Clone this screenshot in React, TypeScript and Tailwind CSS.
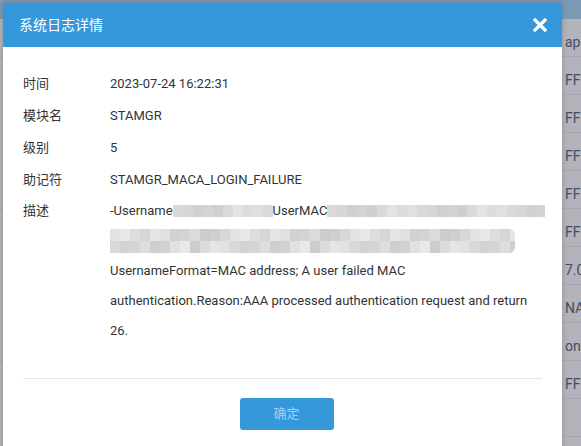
import React from "react";

const bgRows = ["ap8", "FFI", "FFI", "FFI", "FFI", "FFI", "7.0.", "NA-", " on", "FFI", ""];

const mosaicA = ["#d9d9d9", "#cfcfcf", "#e0e0e0", "#d4d4d4", "#dcdcdc", "#d0d0d0", "#e3e3e3", "#d6d6d6", "#dadada"];
const mosaicB = ["#e2e2e2", "#d3d3d3", "#dddddd", "#cccccc", "#e5e5e5", "#d8d8d8", "#d1d1d1", "#e8e8e8", "#dbdbdb", "#d5d5d5", "#cfcfcf", "#e0e0e0"];

function Mosaic({ width, height, rows, palette }: { width: number; height: number; rows: number; palette: string[] }) {
    const cell = 10;
    const cols = Math.ceil(width / cell);
    const ch = height / rows;
    const rects = [];
    for (let r = 0; r < rows; r++) {
        for (let c = 0; c < cols; c++) {
            const color = palette[(c * 7 + r * 5 + ((c * r) % 3)) % palette.length];
            rects.push(<rect key={`${r}-${c}`} x={c * cell} y={r * ch} width={cell} height={ch} fill={color} />);
        }
    }
    return (
        <svg width={width} height={height} className="inline-block align-middle" style={{ borderRadius: rows > 1 ? "0 6px 6px 0" : 0 }}>
            {rects}
        </svg>
    );
}

function Row({ label, children }: { label: string; children: React.ReactNode }) {
    return (
        <div className="flex">
            <div className="w-[87px] shrink-0 leading-[32px]">{label}</div>
            <div className="flex-1">{children}</div>
        </div>
    );
}

export default function App() {
    return (
        <div
            className="relative h-[446px] w-[581px] overflow-hidden bg-[#b3b3bb] text-[13px] text-[#4a4a62]"
            style={{ fontFamily: "Roboto, 'Noto Sans CJK SC', sans-serif" }}
        >
            {/* dimmed page behind */}
            <div className="h-[19px] bg-[#7d9ab5]" />
            <div className="flex flex-col">
                {bgRows.map((t, i) => (
                    <div key={i} className="h-[38px] border-b border-[#a6a6ae] pl-[565px] pt-[14px] whitespace-nowrap text-[14px] leading-[18px]">
                        {t}
                    </div>
                ))}
            </div>

            {/* dialog */}
            <div className="absolute left-[3px] top-[3px] h-[460px] w-[559px] bg-white shadow-[0_0_6px_rgba(0,0,0,0.2)]">
                <div className="flex h-[44px] items-center justify-between bg-[#3498db] pl-[16px] pr-[14px] text-[14px] text-white">
                    <span>系统日志详情</span>
                    <svg width="16" height="16" viewBox="0 0 16 16">
                        <path d="M3 3 L13 13 M13 3 L3 13" stroke="white" strokeWidth="3.2" strokeLinecap="square" />
                    </svg>
                </div>

                <div className="px-[20px] pt-[21px] text-[#333333]">
                    <Row label="时间"><div className="leading-[32px]">2023-07-24 16:22:31</div></Row>
                    <Row label="模块名"><div className="leading-[32px]">STAMGR</div></Row>
                    <Row label="级别"><div className="leading-[32px]">5</div></Row>
                    <Row label="助记符"><div className="leading-[32px]">STAMGR_MACA_LOGIN_FAILURE</div></Row>
                    <div className="flex">
                        <div className="w-[87px] shrink-0 leading-[30px]">描述</div>
                        <div className="flex-1 leading-[30px]">
                            <div className="flex h-[30px] items-center whitespace-nowrap">
                                <span>-Username</span>
                                <Mosaic width={100} height={12} rows={1} palette={mosaicA} />
                                <span>UserMAC</span>
                                <Mosaic width={218} height={12} rows={1} palette={mosaicA} />
                            </div>
                            <div className="flex h-[30px] items-center">
                                <Mosaic width={405} height={24} rows={2} palette={mosaicB} />
                            </div>
                            <div>UsernameFormat=MAC address; A user failed MAC</div>
                            <div>authentication.Reason:AAA processed authentication request and return</div>
                            <div>26.</div>
                        </div>
                    </div>

                    <div className="mt-[32px] border-t border-[#e5e5e5]" />
                    <div className="flex justify-center pl-[8px] pt-[19px]">
                        <button className="h-[32px] w-[94px] rounded-[3px] bg-[#3498db] text-[13px] text-[#a3d0f2]">
                            确定
                        </button>
                    </div>
                </div>
            </div>
        </div>
    );
}
